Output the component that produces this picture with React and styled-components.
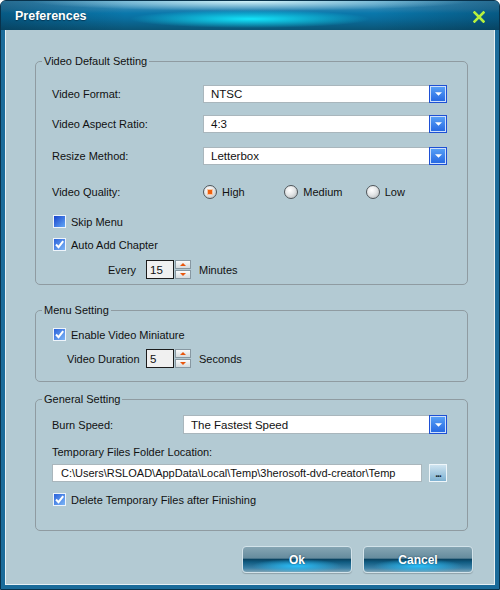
import React from 'react';
import styled, { createGlobalStyle } from 'styled-components';

const GlobalStyle = createGlobalStyle`
  html, body {
    margin: 0;
    padding: 0;
    background: #ffffff;
  }
  body {
    font-family: 'Liberation Sans', Arial, sans-serif;
    font-size: 11px;
    color: #111;
  }
  * {
    box-sizing: border-box;
  }
`;

const Window = styled.div`
  width: 500px;
  height: 590px;
  display: flex;
  flex-direction: column;
  background: #1a6b9a;
  border: 1px solid #08324c;
  border-radius: 6px 6px 0 0;
  overflow: hidden;
`;

const TitleBar = styled.div`
  height: 29px;
  flex: none;
  display: flex;
  align-items: center;
  justify-content: space-between;
  padding: 0 14px 0 14px;
  background:
    radial-gradient(ellipse 120px 9px at 50% 62%, rgba(20, 235, 255, 0.95), rgba(20, 235, 255, 0)),
    radial-gradient(ellipse 220px 10px at 50% 0%, rgba(225, 252, 255, 0.9), rgba(225, 252, 255, 0)),
    linear-gradient(90deg, rgba(0, 35, 60, 0.35), rgba(0, 0, 0, 0) 25%, rgba(0, 0, 0, 0) 75%, rgba(0, 35, 60, 0.35)),
    linear-gradient(#3c92bd 0%, #2683b2 28%, #0a78ac 42%, #0a6e9e 62%, #0b5475 100%);
`;

const Title = styled.span`
  color: #fff;
  font-weight: bold;
  font-size: 12.5px;
  text-shadow: 0 1px 1px rgba(0, 30, 50, 0.6);
`;

const CloseBtn = styled.span`
  display: flex;
  width: 12px;
  height: 12px;
  margin-top: 2px;
`;

const Panel = styled.div`
  flex: 1;
  margin: 0 4px 4px;
  border: 1px solid #e6f0f4;
  border-top: none;
  background: #b3cad3;
  padding: 25px 26px 0 29px;
  display: flex;
  flex-direction: column;
`;

const Group = styled.fieldset`
  margin: ${p => p.$mt}px 0 0;
  padding: 0 20px ${p => p.$pb}px 16px;
  border: 1px solid #8f9ba1;
  border-radius: 5px;
  min-width: 0;
`;

const Legend = styled.legend`
  padding: 0 2px;
  margin-left: -10px;
  line-height: 13px;
  font-size: 11px;
`;

const Row = styled.div`
  display: flex;
  align-items: center;
  height: ${p => p.$h}px;
  margin-top: ${p => p.$mt}px;
  padding-left: ${p => p.$indent || 0}px;
`;

const Label = styled.span`
  width: ${p => p.$w}px;
  flex: none;
  white-space: nowrap;
`;

const SelectBox = styled.div`
  flex: 1;
  height: 100%;
  display: flex;
  background: #fff;
  border: 1px solid #a9b6bc;
`;

const SelectText = styled.span`
  flex: 1;
  display: flex;
  align-items: center;
  padding-left: 7px;
  font-size: 11.5px;
`;

const ArrowBtn = styled.span`
  width: 18px;
  margin: -1px -1px -1px 0;
  display: flex;
  align-items: center;
  justify-content: center;
  border: 1px solid #1e50d4;
  box-shadow: inset 0 0 0 1px #cfe0fb;
  background: linear-gradient(#59a2f6, #2466e2);
`;

const RadioItem = styled.label`
  width: 83px;
  display: flex;
  align-items: center;
  gap: 5px;
`;

const RadioDot = styled.span`
  width: 14px;
  height: 14px;
  border-radius: 50%;
  border: 1px solid #50565a;
  background: radial-gradient(circle at 40% 35%, #ffffff 0%, #e4e6e7 45%, #aeb3b6 100%);
  display: flex;
  align-items: center;
  justify-content: center;
  &::after {
    content: '';
    width: 4px;
    height: 4px;
    background: ${p => (p.$on ? '#f0600e' : 'transparent')};
    box-shadow: ${p => (p.$on ? '0 0 0 1px #f8c4a0' : 'none')};
  }
`;

const CheckRow = styled.label`
  display: flex;
  align-items: center;
  gap: 5px;
  margin-left: 1px;
`;

const CheckBox = styled.span`
  width: 13px;
  height: 13px;
  flex: none;
  display: flex;
  border: 1px solid #eef4fb;
  background: ${p =>
    p.$on
      ? 'linear-gradient(135deg, #2a62da, #7db6f6)'
      : 'linear-gradient(135deg, #1743cc, #63a8f6)'};
`;

const SpinInput = styled.span`
  width: 28px;
  height: 19px;
  flex: none;
  display: flex;
  align-items: center;
  padding-left: 3px;
  font-size: 11.5px;
  background: #f0f0f0;
  border: 1px solid #1c1c1c;
`;

const Spinner = styled.span`
  width: 16px;
  height: 19px;
  margin-left: 1px;
  flex: none;
  display: flex;
  flex-direction: column;
  gap: 1px;
`;

const SpinBtn = styled.span`
  flex: 1;
  display: flex;
  align-items: center;
  justify-content: center;
  border: 1px solid #8797a1;
  background: linear-gradient(#fbfbfb, #d5dbde);
`;

const Unit = styled.span`
  margin-left: 8px;
`;

const PathInput = styled.span`
  flex: 1;
  height: 100%;
  display: flex;
  align-items: center;
  padding-left: 8px;
  font-size: 11px;
  background: #fff;
  border: 1px solid #a9b6bc;
  white-space: nowrap;
  overflow: hidden;
`;

const BrowseBtn = styled.span`
  width: 18px;
  height: 18px;
  margin-left: 7px;
  flex: none;
  display: flex;
  align-items: flex-end;
  justify-content: center;
  padding-bottom: 3px;
  border: 1px solid #eef6fa;
  background: linear-gradient(#cfe4f0, #7fb2d2);
  color: #102030;
  font-weight: bold;
  font-size: 10px;
  line-height: 8px;
  letter-spacing: -1px;
`;

const ButtonRow = styled.div`
  display: flex;
  justify-content: flex-end;
  gap: 11px;
  margin: 15px -5px 0 0;
`;

const DlgButton = styled.button`
  width: 110px;
  height: 27px;
  border-radius: 4px;
  border: 1px solid #d3e3ea;
  box-shadow: 0 1px 1px rgba(0, 0, 0, 0.2);
  color: #fff;
  font-family: 'Liberation Sans', Arial, sans-serif;
  font-weight: bold;
  font-size: 12px;
  text-shadow: 0 0 2px rgba(0, 40, 70, 0.6);
  padding: 0;
  background:
    radial-gradient(ellipse 45px 7px at 50% 76%, rgba(40, 195, 255, 0.95), rgba(40, 195, 255, 0)),
    linear-gradient(#86a5b3 0%, #668c9e 44%, #0a4463 50%, #0f5a80 60%, #3a80a6 84%, #7ea3b5 100%);
`;

const Arrow = ({ dir = 'down', color = '#fff', w = 7, h = 4 }) => (
  <svg width={w} height={h} viewBox="0 0 8 4">
    {dir === 'down' ? <path d="M0 0 H8 L4 4 Z" fill={color} /> : <path d="M0 4 H8 L4 0 Z" fill={color} />}
  </svg>
);

const Select = ({ value }) => (
  <SelectBox>
    <SelectText>{value}</SelectText>
    <ArrowBtn>
      <Arrow />
    </ArrowBtn>
  </SelectBox>
);

const Radio = ({ label, on }) => (
  <RadioItem>
    <RadioDot $on={on} />
    {label}
  </RadioItem>
);

const Check = ({ label, on }) => (
  <CheckRow>
    <CheckBox $on={on}>
      {on && (
        <svg width="11" height="11" viewBox="0 0 11 11">
          <path d="M2 5.5 L4.5 8.2 L9.2 2.2" stroke="#fff" strokeWidth="2" fill="none" />
        </svg>
      )}
    </CheckBox>
    {label}
  </CheckRow>
);

const Spin = ({ value }) => (
  <>
    <SpinInput>{value}</SpinInput>
    <Spinner>
      <SpinBtn>
        <Arrow dir="up" color="#e8560e" w={6} h={3} />
      </SpinBtn>
      <SpinBtn>
        <Arrow dir="down" color="#e8560e" w={6} h={3} />
      </SpinBtn>
    </Spinner>
  </>
);

export default function App() {
  return (
    <>
      <GlobalStyle />
      <Window>
        <TitleBar>
          <Title>Preferences</Title>
          <CloseBtn>
            <svg width="12" height="12" viewBox="0 0 12 12">
              <path d="M1.5 1.5 L10.5 10.5 M10.5 1.5 L1.5 10.5" stroke="#b6f03e" strokeWidth="2.6" strokeLinecap="square" />
            </svg>
          </CloseBtn>
        </TitleBar>
        <Panel>
          <Group $mt={0} $pb={5}>
            <Legend>Video Default Setting</Legend>
            <Row $h={18} $mt={17}>
              <Label $w={151}>Video Format:</Label>
              <Select value="NTSC" />
            </Row>
            <Row $h={18} $mt={12}>
              <Label $w={151}>Video Aspect Ratio:</Label>
              <Select value="4:3" />
            </Row>
            <Row $h={18} $mt={14}>
              <Label $w={151}>Resize Method:</Label>
              <Select value="Letterbox" />
            </Row>
            <Row $h={14} $mt={20}>
              <Label $w={151}>Video Quality:</Label>
              <Radio label="High" on />
              <Radio label="Medium" />
              <Radio label="Low" />
            </Row>
            <Row $h={13} $mt={16}>
              <Check label="Skip Menu" />
            </Row>
            <Row $h={13} $mt={10}>
              <Check label="Auto Add Chapter" on />
            </Row>
            <Row $h={19} $mt={9} $indent={56}>
              <Label $w={38}>Every</Label>
              <Spin value="15" />
              <Unit>Minutes</Unit>
            </Row>
          </Group>

          <Group $mt={19} $pb={13}>
            <Legend>Menu Setting</Legend>
            <Row $h={13} $mt={11}>
              <Check label="Enable Video Miniature" on />
            </Row>
            <Row $h={19} $mt={8} $indent={15}>
              <Label $w={79}>Video Duration</Label>
              <Spin value="5" />
              <Unit>Seconds</Unit>
            </Row>
          </Group>

          <Group $mt={11} $pb={24}>
            <Legend>General Setting</Legend>
            <Row $h={19} $mt={9}>
              <Label $w={131}>Burn Speed:</Label>
              <Select value="The Fastest Speed" />
            </Row>
            <Row $h={13} $mt={11}>
              <Label $w={300}>Temporary Files Folder Location:</Label>
            </Row>
            <Row $h={18} $mt={6}>
              <PathInput>C:\Users\RSLOAD\AppData\Local\Temp\3herosoft-dvd-creator\Temp</PathInput>
              <BrowseBtn>...</BrowseBtn>
            </Row>
            <Row $h={13} $mt={11}>
              <Check label="Delete Temporary Files after Finishing" on />
            </Row>
          </Group>

          <ButtonRow>
            <DlgButton>Ok</DlgButton>
            <DlgButton>Cancel</DlgButton>
          </ButtonRow>
        </Panel>
      </Window>
    </>
  );
}
